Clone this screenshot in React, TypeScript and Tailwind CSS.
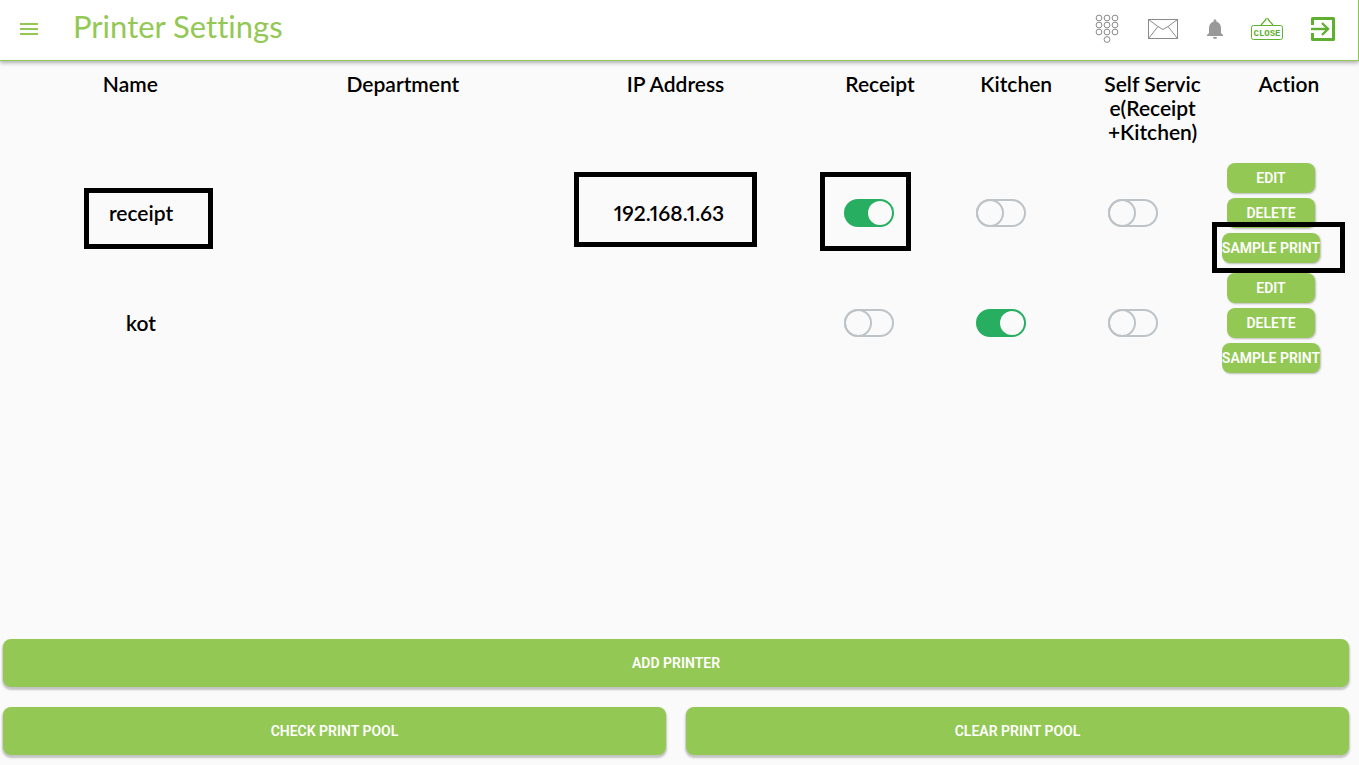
import { MdMenu, MdNotifications } from "react-icons/md";

type Printer = {
  name: string;
  department: string;
  ip: string;
  receipt: boolean;
  kitchen: boolean;
  selfService: boolean;
  highlighted?: boolean;
};

const printers: Printer[] = [
  { name: "receipt", department: "", ip: "192.168.1.63", receipt: true, kitchen: false, selfService: false, highlighted: true },
  { name: "kot", department: "", ip: "", receipt: false, kitchen: true, selfService: false },
];

const rowGrid = "grid grid-cols-[2fr_2fr_2fr_1fr_1fr_1fr_1fr]";

function DialpadIcon() {
  return (
    <svg width="24" height="30" viewBox="0 0 24 30" fill="none" stroke="#8a8a8a" strokeWidth="1">
      {[4, 11, 18].map((y) => [4, 12, 20].map((x) => <circle key={`${x}-${y}`} cx={x} cy={y} r="2.9" />))}
      <circle cx="12" cy="25.5" r="2.9" />
    </svg>
  );
}

function MailIcon() {
  return (
    <svg width="30" height="20" viewBox="0 0 30 20" fill="none" stroke="#8a8a8a" strokeWidth="1">
      <rect x="0.5" y="0.5" width="29" height="19" />
      <path d="M0.5 0.5L10 7.5L15 10.5L20 7.5L29.5 0.5M0.5 19.5L10 7.5M29.5 19.5L20 7.5" />
    </svg>
  );
}

function CloseSignIcon() {
  return (
    <svg width="32" height="24" viewBox="0 0 32 24" fill="none" stroke="#5fb030" strokeWidth="1">
      <rect x="0.5" y="8.5" width="31" height="14" rx="2" />
      <path d="M10 8L15 2.5M22 8L17 2.5" strokeWidth="1.2" />
      <path d="M14.5 3V1.8H17.5V3" />
      <text x="16" y="19" textAnchor="middle" fill="#5fb030" stroke="none" className="font-['Liberation_Mono',monospace] text-[9px] font-bold">
        CLOSE
      </text>
    </svg>
  );
}

function ExitIcon() {
  return (
    <svg width="24" height="24" viewBox="0 0 24 24" fill="none" stroke="#5fb030">
      <path d="M1.5 8V1.5H22.5V22.5H1.5V16" strokeWidth="3" strokeLinejoin="round" />
      <path d="M0 12H16" strokeWidth="2.4" />
      <path d="M11 6L17 12L11 18" strokeWidth="2.4" />
    </svg>
  );
}

function Toggle({ label, on }: { label: string; on: boolean }) {
  return (
    <input
      type="checkbox"
      role="switch"
      aria-label={label}
      defaultChecked={on}
      className="flex h-7 w-[50px] cursor-pointer appearance-none rounded-full border-2 border-[#bdc3c7] before:-m-0.5 before:block before:size-7 before:shrink-0 before:rounded-full before:border-2 before:border-[#bdc3c7] checked:border-[#27ae60] checked:bg-[#27ae60] checked:before:m-0 checked:before:ml-auto checked:before:size-6 checked:before:border-0 checked:before:bg-[#fafafa]"
    />
  );
}

function ActionButton({ children, wide }: { children: string; wide?: boolean }) {
  return (
    <button
      type="button"
      className={`${wide ? "w-[98px]" : "w-[88px]"} flex h-[30px] shrink-0 items-center justify-center rounded-lg bg-[#93c854] font-[Roboto,sans-serif] text-sm font-semibold whitespace-nowrap text-white shadow-[1px_1px_2px_rgba(0,0,0,0.25)]`}
    >
      {children}
    </button>
  );
}

function PoolButton({ children }: { children: string }) {
  return (
    <button
      type="button"
      className="h-12 flex-1 rounded-lg bg-[#93c854] font-[Roboto,sans-serif] text-sm font-semibold text-white shadow-[0_2px_2px_1px_rgba(0,0,0,0.22)]"
    >
      {children}
    </button>
  );
}

function Highlight({ className }: { className: string }) {
  return <span aria-hidden="true" className={`pointer-events-none absolute z-10 border-5 border-black ${className}`} />;
}

function PrinterRow({ printer }: { printer: Printer }) {
  const cell = "relative flex items-center justify-center";
  const mark = printer.highlighted;
  return (
    <tr className={`${rowGrid} mr-7 ml-[11px] h-[110px]`}>
      <td className={`${cell} pr-1`}>
        {printer.name}
        {mark && <Highlight className="top-[30px] left-[73px] h-[61px] w-[129px]" />}
      </td>
      <td className={`${cell} pr-1`}>{printer.department}</td>
      <td className={`${cell} pr-1`}>
        {printer.ip}
        {mark && <Highlight className="top-3.5 left-[35px] h-[75px] w-[183px]" />}
      </td>
      <td className={cell}>
        <Toggle label={`${printer.name} receipt`} on={printer.receipt} />
        {mark && <Highlight className="top-3.5 left-[17px] h-[79px] w-[91px]" />}
      </td>
      <td className={cell}>
        <Toggle label={`${printer.name} kitchen`} on={printer.kitchen} />
      </td>
      <td className={cell}>
        <Toggle label={`${printer.name} self service`} on={printer.selfService} />
      </td>
      <td className="relative flex flex-col items-center justify-center gap-[5px] pl-3">
        <ActionButton>EDIT</ActionButton>
        <ActionButton>DELETE</ActionButton>
        <ActionButton wide>SAMPLE PRINT</ActionButton>
        {mark && <Highlight className="top-16 left-[13px] h-[51px] w-[133px]" />}
      </td>
    </tr>
  );
}

export default function App() {
  return (
    <div className="flex min-h-screen flex-col overflow-x-hidden bg-[#fafafa] font-[Lato,sans-serif] text-black [font-variant-ligatures:none]">
      <header className="flex h-[61px] items-center justify-between border-r border-b border-[#93c854] bg-white pr-[23px] pb-0.5 pl-[17px] shadow-[0_2px_4px_rgba(0,0,0,0.3)]">
        <div className="flex items-center gap-8">
          <button type="button" aria-label="Menu" className="text-[#93c854]">
            <MdMenu size={24} />
          </button>
          <h1 className="pb-1.5 text-[31px] leading-9 text-[#93c854]">Printer Settings</h1>
        </div>
        <nav aria-label="Tools" className="flex items-center">
          <button type="button" aria-label="Dial pad"><DialpadIcon /></button>
          <button type="button" aria-label="Messages" className="ml-[29px]"><MailIcon /></button>
          <button type="button" aria-label="Notifications" className="ml-[25px] text-[#999999]">
            <MdNotifications size={24} />
          </button>
          <button type="button" aria-label="Close shop" className="ml-6"><CloseSignIcon /></button>
          <button type="button" aria-label="Sign out" className="ml-7"><ExitIcon /></button>
        </nav>
      </header>

      <main className="flex flex-1 flex-col">
        <table className="block text-[21px] leading-6 font-semibold proportional-nums">
          <thead className="block">
            <tr className={`${rowGrid} mr-0.5 -ml-1.5 pt-[11px] pb-3.5`}>
              <th className="font-semibold">Name</th>
              <th className="font-semibold">Department</th>
              <th className="font-semibold">IP Address</th>
              <th className="font-semibold">Receipt</th>
              <th className="font-semibold">Kitchen</th>
              <th className="font-semibold">
                Self Servic
                <br />
                e(Receipt
                <br />
                +Kitchen)
              </th>
              <th className="font-semibold">Action</th>
            </tr>
          </thead>
          <tbody className="block">
            {printers.map((printer) => (
              <PrinterRow key={printer.name} printer={printer} />
            ))}
          </tbody>
        </table>

        <div className="mt-auto flex flex-col gap-5 pr-2.5 pb-2.5 pl-[3px]">
          <div className="flex">
            <PoolButton>ADD PRINTER</PoolButton>
          </div>
          <div className="flex gap-5">
            <PoolButton>CHECK PRINT POOL</PoolButton>
            <PoolButton>CLEAR PRINT POOL</PoolButton>
          </div>
        </div>
      </main>
    </div>
  );
}
